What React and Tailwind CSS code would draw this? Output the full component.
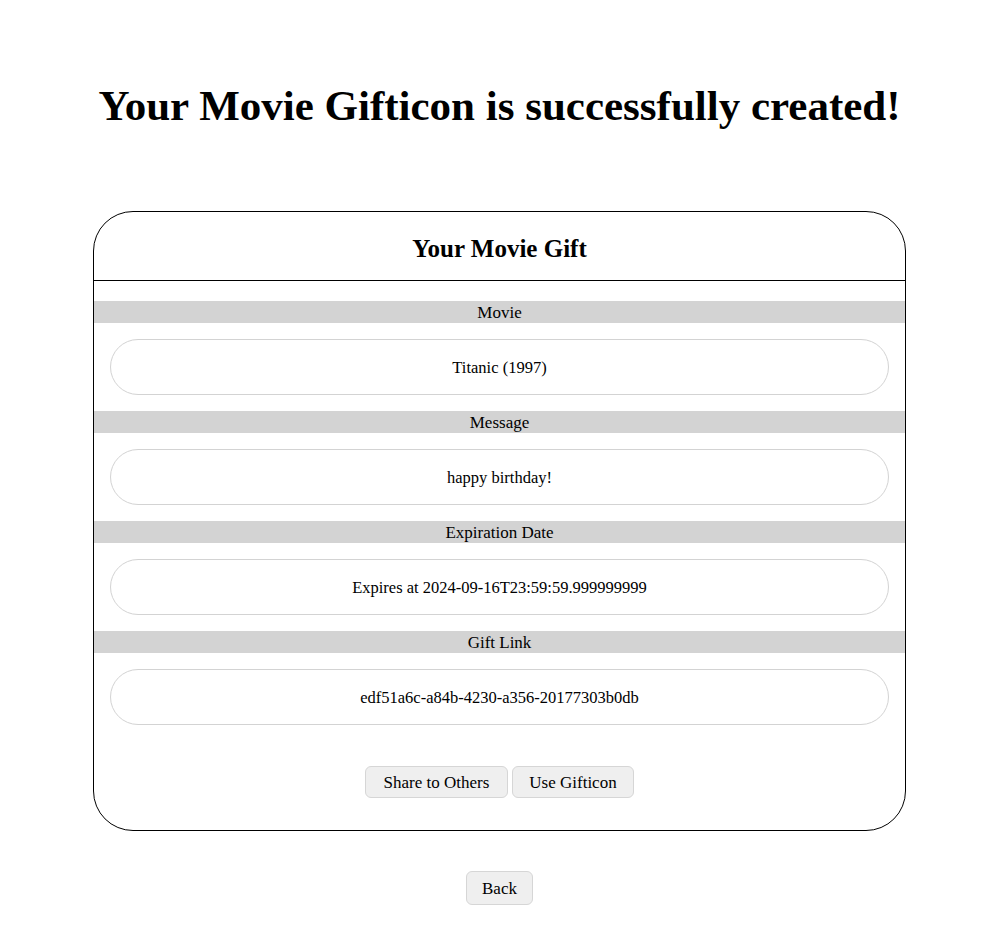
const fields = [
  { label: "Movie", value: "Titanic (1997)" },
  { label: "Message", value: "happy birthday!" },
  { label: "Expiration Date", value: "Expires at 2024-09-16T23:59:59.999999999" },
  { label: "Gift Link", value: "edf51a6c-a84b-4230-a356-20177303b0db" },
];

export default function App() {
  return (
    <div className="min-h-screen bg-white pl-[7px] text-black font-['Liberation_Serif',serif]">
      <h1 className="pt-[82px] text-center text-[43px] font-bold leading-[48px]">
        Your Movie Gifticon is successfully created!
      </h1>

      <div className="mx-auto mt-[81px] w-[813px] rounded-[40px] border border-black pb-[32px]">
        <h2 className="flex h-[69px] items-center justify-center border-b border-black pt-[6px] text-[25px] font-bold">
          Your Movie Gift
        </h2>

        <div className="pt-[20px]">
          {fields.map((f) => (
            <div key={f.label} className="mb-[16px]">
              <div className="flex h-[22px] items-center justify-center bg-[#d3d3d3] pt-[1px] text-[17px]">
                {f.label}
              </div>
              <div className="mx-[16px] mt-[16px] flex h-[56px] items-center justify-center rounded-full border border-[#d3d3d3] pt-[2px] text-[16.5px]">
                {f.value}
              </div>
            </div>
          ))}
        </div>

        <div className="mt-[41px] flex justify-center gap-[4px]">
          <button className="h-[32px] w-[143px] rounded-[6px] border border-[#d6d6d6] bg-[#efefef] pt-[1px] text-[17px]">
            Share to Others
          </button>
          <button className="h-[32px] w-[122px] rounded-[6px] border border-[#d6d6d6] bg-[#efefef] pt-[1px] text-[17px]">
            Use Gifticon
          </button>
        </div>
      </div>

      <div className="mt-[40px] flex justify-center pb-[33px]">
        <button className="h-[34px] w-[67px] rounded-[6px] border border-[#d6d6d6] bg-[#efefef] pt-[1px] text-[17px]">
          Back
        </button>
      </div>
    </div>
  );
}
